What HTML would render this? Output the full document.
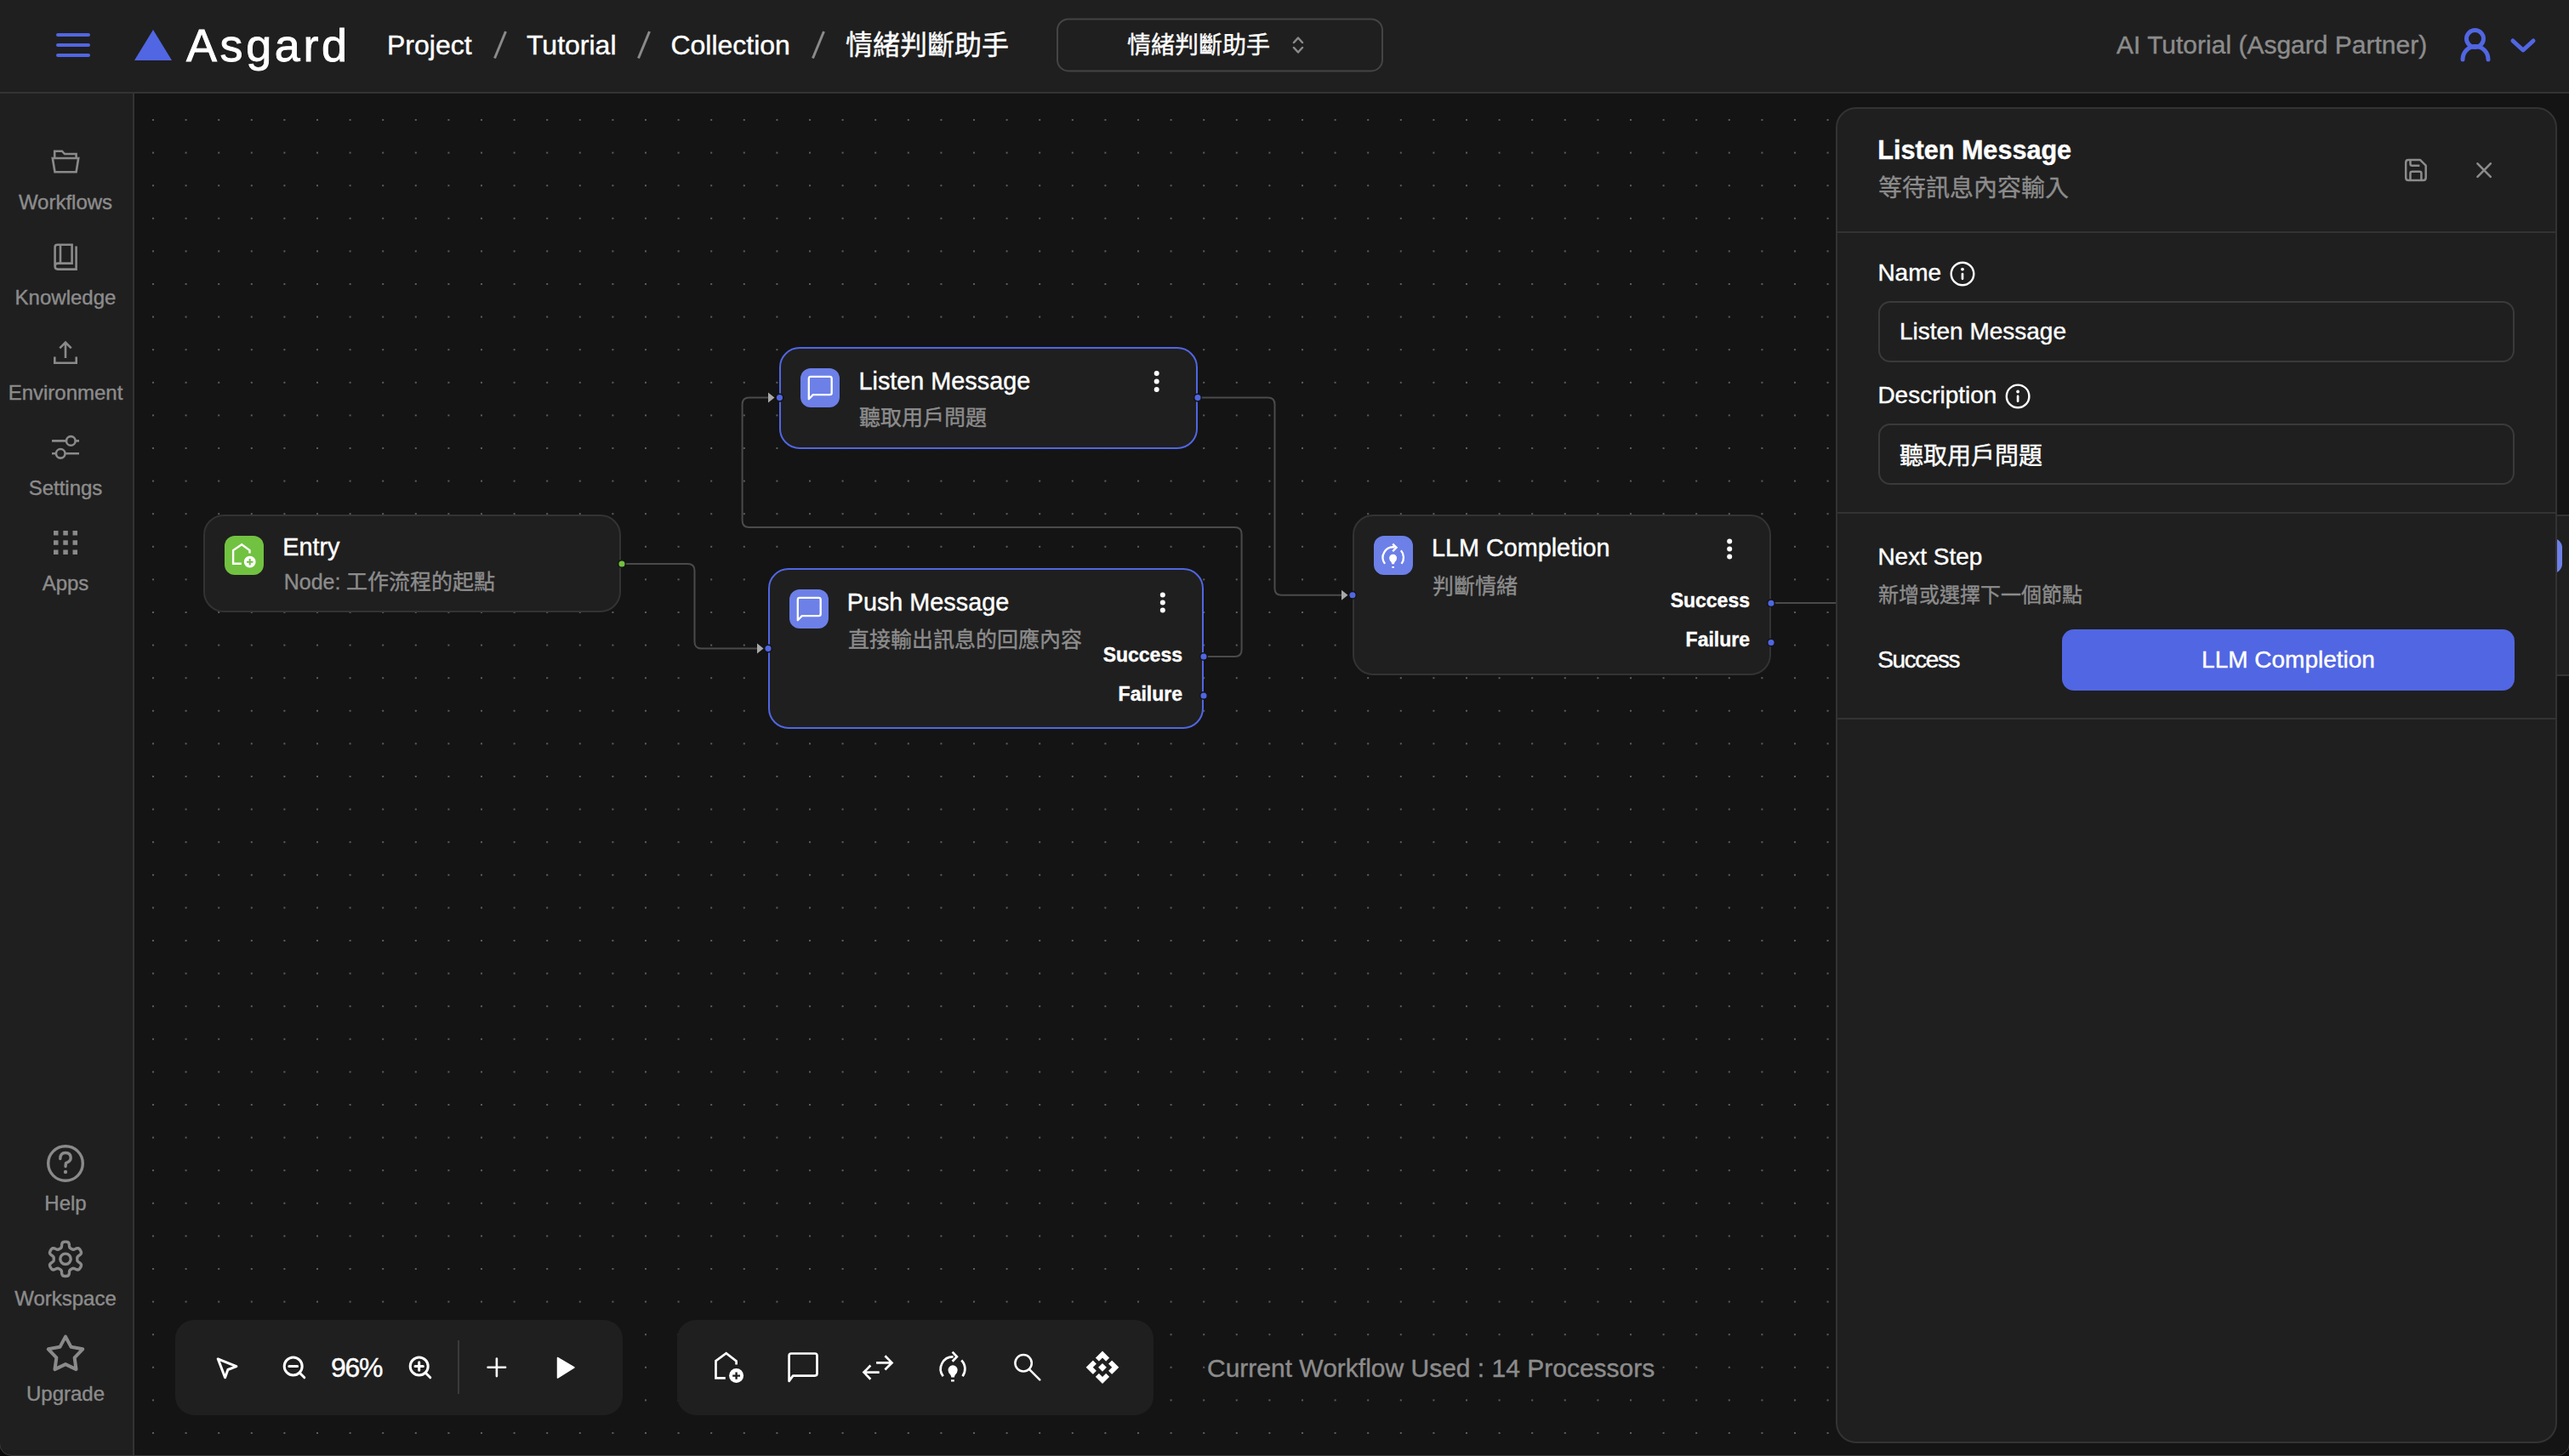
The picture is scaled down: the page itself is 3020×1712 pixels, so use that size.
<!DOCTYPE html>
<html lang="zh-TW">
<head>
<meta charset="utf-8">
<style>
html,body{margin:0;padding:0;}
body{width:3020px;height:1712px;overflow:hidden;position:relative;background:#141414;font-family:"Liberation Sans",sans-serif;color:#fff;}
.a{position:absolute;}
.t{position:absolute;white-space:nowrap;line-height:1;-webkit-text-stroke:0.4px currentColor;}
#hdr{left:0;top:0;width:3020px;height:108px;background:#1f1f1f;border-bottom:2px solid #333;}
#side{left:0;top:110px;width:156px;height:1602px;background:#1f1f1f;border-right:2px solid #333;}
#canvas{left:158px;top:110px;width:2862px;height:1602px;background-color:#141414;}
.node{position:absolute;box-sizing:border-box;background:#1f1f1f;border:2px solid #333;border-radius:24px;}
.node.sel{border-color:#5166e3;}
.ico{position:absolute;width:46px;height:46px;border-radius:12px;}
.gray{color:#8c8c8c;}
.panel{left:2158px;top:126px;width:848px;height:1570.5px;box-sizing:border-box;background:#1f1f1f;border:2px solid #333;border-radius:24px;}
.hr{position:absolute;height:2px;background:#333;}
.inp{position:absolute;box-sizing:border-box;border:2px solid #3a3a3a;border-radius:14px;}
.tb{position:absolute;top:1552px;height:112px;background:#1f1f1f;border-radius:22px;}
svg{position:absolute;overflow:visible;}
</style>
</head>
<body>
<!-- canvas with dots -->
<div id="canvas" class="a">
<svg style="left:0;top:0" width="2862" height="1602"><defs><pattern id="dots" patternUnits="userSpaceOnUse" x="21" y="30" width="38.6" height="38.6"><rect x="0" y="0" width="2" height="2" fill="#5c5c5c"/></pattern></defs><rect width="2862" height="1602" fill="url(#dots)"/></svg>
</div>

<!-- header -->
<div id="hdr" class="a"></div>
<svg style="left:0;top:0" width="3020" height="108">
 <g stroke="#5166e3" stroke-width="4" stroke-linecap="round">
  <line x1="68" y1="41" x2="104" y2="41"/><line x1="68" y1="53" x2="104" y2="53"/><line x1="68" y1="65" x2="104" y2="65"/>
 </g>
 <polygon points="158,71 202,71 180,35" fill="#5166e3"/>
 <g stroke="#8a8a8a" stroke-width="3">
  <line x1="581.5" y1="68.5" x2="594.5" y2="37"/><line x1="750.5" y1="68.5" x2="763.5" y2="37"/><line x1="955.5" y1="68.5" x2="968.5" y2="37"/>
 </g>
 <rect x="1243" y="22.4" width="382" height="61" rx="13" fill="none" stroke="#444" stroke-width="2"/>
 <g stroke="#8a8a8a" stroke-width="2.5" fill="none" stroke-linecap="round" stroke-linejoin="round">
  <polyline points="1521,50 1526,44.5 1531,50"/><polyline points="1521,56 1526,61.5 1531,56"/>
 </g>
 <g stroke="#5166e3" stroke-width="5" fill="none" stroke-linecap="round">
  <circle cx="2909.5" cy="45.5" r="10"/>
  <path d="M2895 70 A15 15.5 0 0 1 2925 70"/>
  <polyline points="2954,48 2966,59 2978,48" stroke-linejoin="round"/>
 </g>
</svg>
<div class="t" style="left:219px;top:26px;font-size:54px;letter-spacing:3.6px;-webkit-text-stroke:0.9px #fff;">Asgard</div>
<div class="t" style="left:455px;top:37.4px;font-size:32px;">Project</div>
<div class="t" style="left:619px;top:37.4px;font-size:32px;">Tutorial</div>
<div class="t" style="left:788.4px;top:37.4px;font-size:32px;">Collection</div>
<div class="t" style="left:994px;top:37.4px;font-size:32px;">情緒判斷助手</div>
<div class="t" style="left:1325px;top:40px;font-size:28px;">情緒判斷助手</div>
<div class="t gray" style="left:2488px;top:37.8px;font-size:30px;">AI Tutorial (Asgard Partner)</div>
<!-- sidebar -->
<div id="side" class="a"></div>
<svg style="left:0;top:110px" width="156" height="1602">
 <g stroke="#8a8a8a" stroke-width="3" fill="none" stroke-linejoin="round" stroke-linecap="round">
  <!-- folder -->
  <path d="M61.8 76 L64.5 92.2 L89.6 92.2 L92.2 76 Z M64.2 75.5 L64.2 67.7 L73 67.7 L76 71 L89.6 71 L89.6 75.5" stroke-width="2.6" stroke-linejoin="miter"/>
  <!-- book -->
  <path d="M64.6 203 L64.6 180.5 Q64.6 177.7 67.4 177.7 L84.6 177.7 L84.6 199.6 L68 199.6 Q64.6 199.6 64.6 203 Q64.6 206.6 68 206.6 L89.6 206.6 L89.6 179.5 M71 178 L71 199.6" stroke-width="2.6" stroke-linecap="butt" stroke-linejoin="miter"/>
  <!-- upload -->
  <path d="M77 292.5 L77 311 M70.3 299.3 L77 292.5 L83.7 299.3 M64.3 309.5 L64.3 316.7 L89.7 316.7 L89.7 309.5" stroke-width="2.6" stroke-linecap="butt" stroke-linejoin="miter"/>
  <!-- sliders -->
  <path d="M61 408.4 L93 408.4 M61 423.3 L93 423.3" stroke-width="2.6" stroke-linecap="butt"/>
  <circle cx="83.3" cy="408.4" r="5.3" fill="#1f1f1f" stroke-width="2.6"/>
  <circle cx="71.2" cy="423.3" r="5.3" fill="#1f1f1f" stroke-width="2.6"/>
  <!-- help -->
  <circle cx="77" cy="1258" r="20.3" stroke-width="3.4"/>
  <path d="M70.8 1252.5 Q70.8 1245.5 77 1245.5 Q83.2 1245.5 83.2 1251.5 Q83.2 1255.5 77.5 1257.5 L77 1261.5" stroke-width="3.4"/>
  <!-- gear -->
  <path d="M90.80 1370.30 L90.80 1370.66 L90.80 1371.02 L90.81 1371.39 L90.83 1371.75 L90.88 1372.13 L91.01 1372.52 L91.26 1372.94 L91.73 1373.43 L92.47 1374.02 L93.42 1374.70 L94.34 1375.44 L95.01 1376.15 L95.38 1376.81 L95.50 1377.40 L95.48 1377.95 L95.36 1378.47 L95.19 1378.98 L94.98 1379.46 L94.75 1379.94 L94.49 1380.40 L94.22 1380.85 L93.93 1381.29 L93.61 1381.71 L93.26 1382.11 L92.87 1382.48 L92.40 1382.77 L91.82 1382.96 L91.07 1382.97 L90.12 1382.75 L89.02 1382.32 L87.95 1381.84 L87.08 1381.49 L86.42 1381.33 L85.92 1381.32 L85.52 1381.41 L85.17 1381.55 L84.84 1381.71 L84.53 1381.89 L84.21 1382.07 L83.90 1382.25 L83.59 1382.43 L83.27 1382.61 L82.96 1382.80 L82.65 1383.00 L82.36 1383.23 L82.08 1383.54 L81.84 1383.97 L81.65 1384.62 L81.52 1385.56 L81.40 1386.72 L81.22 1387.89 L80.94 1388.83 L80.55 1389.47 L80.10 1389.88 L79.61 1390.13 L79.10 1390.29 L78.58 1390.39 L78.06 1390.45 L77.53 1390.49 L77.00 1390.50 L76.47 1390.49 L75.94 1390.45 L75.42 1390.39 L74.90 1390.29 L74.39 1390.13 L73.90 1389.88 L73.45 1389.47 L73.06 1388.83 L72.78 1387.89 L72.60 1386.72 L72.48 1385.56 L72.35 1384.62 L72.16 1383.97 L71.92 1383.54 L71.64 1383.23 L71.35 1383.00 L71.04 1382.80 L70.73 1382.61 L70.41 1382.43 L70.10 1382.25 L69.79 1382.07 L69.47 1381.89 L69.16 1381.71 L68.83 1381.55 L68.48 1381.41 L68.08 1381.32 L67.58 1381.33 L66.92 1381.49 L66.05 1381.84 L64.98 1382.32 L63.88 1382.75 L62.93 1382.97 L62.18 1382.96 L61.60 1382.77 L61.13 1382.48 L60.74 1382.11 L60.39 1381.71 L60.07 1381.29 L59.78 1380.85 L59.51 1380.40 L59.25 1379.94 L59.02 1379.46 L58.81 1378.98 L58.64 1378.47 L58.52 1377.95 L58.50 1377.40 L58.62 1376.81 L58.99 1376.15 L59.66 1375.44 L60.58 1374.70 L61.53 1374.02 L62.27 1373.43 L62.74 1372.94 L62.99 1372.52 L63.12 1372.13 L63.17 1371.75 L63.19 1371.39 L63.20 1371.02 L63.20 1370.66 L63.20 1370.30 L63.20 1369.94 L63.20 1369.58 L63.19 1369.21 L63.17 1368.85 L63.12 1368.47 L62.99 1368.08 L62.74 1367.66 L62.27 1367.17 L61.53 1366.58 L60.58 1365.90 L59.66 1365.16 L58.99 1364.45 L58.62 1363.79 L58.50 1363.20 L58.52 1362.65 L58.64 1362.13 L58.81 1361.62 L59.02 1361.14 L59.25 1360.66 L59.51 1360.20 L59.78 1359.75 L60.07 1359.31 L60.39 1358.89 L60.74 1358.49 L61.13 1358.12 L61.60 1357.83 L62.18 1357.64 L62.93 1357.63 L63.88 1357.85 L64.98 1358.28 L66.05 1358.76 L66.92 1359.11 L67.58 1359.27 L68.08 1359.28 L68.48 1359.19 L68.83 1359.05 L69.16 1358.89 L69.47 1358.71 L69.79 1358.53 L70.10 1358.35 L70.41 1358.17 L70.73 1357.99 L71.04 1357.80 L71.35 1357.60 L71.64 1357.37 L71.92 1357.06 L72.16 1356.63 L72.35 1355.98 L72.48 1355.04 L72.60 1353.88 L72.78 1352.71 L73.06 1351.77 L73.45 1351.13 L73.90 1350.72 L74.39 1350.47 L74.90 1350.31 L75.42 1350.21 L75.94 1350.15 L76.47 1350.11 L77.00 1350.10 L77.53 1350.11 L78.06 1350.15 L78.58 1350.21 L79.10 1350.31 L79.61 1350.47 L80.10 1350.72 L80.55 1351.13 L80.94 1351.77 L81.22 1352.71 L81.40 1353.88 L81.52 1355.04 L81.65 1355.98 L81.84 1356.63 L82.08 1357.06 L82.36 1357.37 L82.65 1357.60 L82.96 1357.80 L83.27 1357.99 L83.59 1358.17 L83.90 1358.35 L84.21 1358.53 L84.53 1358.71 L84.84 1358.89 L85.17 1359.05 L85.52 1359.19 L85.92 1359.28 L86.42 1359.27 L87.08 1359.11 L87.95 1358.76 L89.02 1358.28 L90.12 1357.85 L91.07 1357.63 L91.82 1357.64 L92.40 1357.83 L92.87 1358.12 L93.26 1358.49 L93.61 1358.89 L93.93 1359.31 L94.22 1359.75 L94.49 1360.20 L94.75 1360.66 L94.98 1361.14 L95.19 1361.62 L95.36 1362.13 L95.48 1362.65 L95.50 1363.20 L95.38 1363.79 L95.01 1364.45 L94.34 1365.16 L93.42 1365.90 L92.47 1366.58 L91.73 1367.17 L91.26 1367.66 L91.01 1368.08 L90.88 1368.47 L90.83 1368.85 L90.81 1369.21 L90.80 1369.58 L90.80 1369.94 L90.80 1370.30 Z" stroke-width="3.4"/>
  <circle cx="77" cy="1370.3" r="6.2" stroke-width="3.4"/>
  <!-- star -->
  <path d="M77.00 1461.60 L83.58 1473.84 L97.26 1476.32 L87.65 1486.36 L89.52 1500.13 L77.00 1494.10 L64.48 1500.13 L66.35 1486.36 L56.74 1476.32 L70.42 1473.84 Z" stroke-width="4" stroke-linejoin="round"/>
 </g>
 <g fill="#8a8a8a">
  <circle cx="77" cy="1268" r="2.2"/>
  <rect x="63" y="514" width="5.5" height="5.5"/><rect x="74.3" y="514" width="5.5" height="5.5"/><rect x="85.5" y="514" width="5.5" height="5.5"/>
  <rect x="63" y="525.3" width="5.5" height="5.5"/><rect x="74.3" y="525.3" width="5.5" height="5.5"/><rect x="85.5" y="525.3" width="5.5" height="5.5"/>
  <rect x="63" y="536.5" width="5.5" height="5.5"/><rect x="74.3" y="536.5" width="5.5" height="5.5"/><rect x="85.5" y="536.5" width="5.5" height="5.5"/>
 </g>
</svg>
<div class="t gray" style="left:0;width:154px;text-align:center;top:225.7px;font-size:24px;">Workflows</div>
<div class="t gray" style="left:0;width:154px;text-align:center;top:337.7px;font-size:24px;">Knowledge</div>
<div class="t gray" style="left:0;width:154px;text-align:center;top:449.7px;font-size:24px;">Environment</div>
<div class="t gray" style="left:0;width:154px;text-align:center;top:561.7px;font-size:24px;">Settings</div>
<div class="t gray" style="left:0;width:154px;text-align:center;top:673.7px;font-size:24px;">Apps</div>
<div class="t gray" style="left:0;width:154px;text-align:center;top:1403.4px;font-size:24px;">Help</div>
<div class="t gray" style="left:0;width:154px;text-align:center;top:1515.2px;font-size:24px;">Workspace</div>
<div class="t gray" style="left:0;width:154px;text-align:center;top:1626.7px;font-size:24px;">Upgrade</div>

<!-- connectors -->
<svg style="left:0;top:0" width="3020" height="1712">
 <g fill="none" stroke="#4a4a4a" stroke-width="2">
  <path d="M731 663 H808.5 Q816.5 663 816.5 671 V754.6 Q816.5 762.6 824.5 762.6 H891"/>
  <path d="M1408 467.6 H1490.5 Q1498.5 467.6 1498.5 475.6 V691.7 Q1498.5 699.7 1506.5 699.7 H1578"/>
  <path d="M1415 772 H1451.6 Q1459.6 772 1459.6 764 V628 Q1459.6 620 1451.6 620 H880.6 Q872.6 620 872.6 612 V475.6 Q872.6 467.6 880.6 467.6 H904"/>
  <path d="M2082 709 H2170"/>
 </g>
 <g fill="#a8a8a8">
  <polygon points="890,756.6 897.5,762.6 890,768.6"/>
  <polygon points="903,461.6 910.5,467.6 903,473.6"/>
  <polygon points="1577,693.7 1584.5,699.7 1577,705.7"/>
 </g>
</svg>

<!-- Entry node -->
<div class="node" style="left:239px;top:605px;width:491px;height:115px;"></div>
<svg style="left:264px;top:630px" width="46" height="46" viewBox="0 0 46 46">
 <rect width="46" height="46" rx="12" fill="#72c241"/>
 <path d="M19.8 32.7 H10.1 V17.1 L20.2 10.2 L29.5 17.1 V20.6" fill="none" stroke="#fff" stroke-width="2.4"/>
 <circle cx="29.7" cy="30.7" r="6.9" fill="#fff"/>
 <path d="M26 30.7 H33.5 M29.7 27 V34.5" stroke="#72c241" stroke-width="2"/>
</svg>
<div class="t" style="left:332.3px;top:629.3px;font-size:28.8px;">Entry</div>
<div class="t gray" style="left:333.7px;top:672.3px;font-size:25px;">Node: 工作流程的起點</div>

<!-- Listen node -->
<div class="node sel" style="left:916px;top:408px;width:492px;height:120px;"></div>
<svg style="left:941px;top:433px" width="46" height="46" viewBox="0 0 46 46">
 <rect width="46" height="46" rx="12" fill="#6c80e8"/>
 <path d="M9.8 36.2 V12 Q9.8 9.8 12 9.8 H34.5 Q36.7 9.8 36.7 12 V29 Q36.7 31.1 34.5 31.1 H14.8 Z" fill="none" stroke="#fff" stroke-width="2.3" stroke-linejoin="round"/>
</svg>
<div class="t" style="left:1009.5px;top:434.2px;font-size:28.8px;">Listen Message</div>
<div class="t gray" style="left:1010px;top:478.8px;font-size:25px;">聽取用戶問題</div>

<!-- Push node -->
<div class="node sel" style="left:902.5px;top:668px;width:512.5px;height:189px;"></div>
<svg style="left:928px;top:693px" width="46" height="46" viewBox="0 0 46 46">
 <rect width="46" height="46" rx="12" fill="#6c80e8"/>
 <path d="M9.8 36.2 V12 Q9.8 9.8 12 9.8 H34.5 Q36.7 9.8 36.7 12 V29 Q36.7 31.1 34.5 31.1 H14.8 Z" fill="none" stroke="#fff" stroke-width="2.3" stroke-linejoin="round"/>
</svg>
<div class="t" style="left:995.7px;top:694px;font-size:28.8px;">Push Message</div>
<div class="t gray" style="left:997px;top:739.8px;font-size:25px;">直接輸出訊息的回應內容</div>
<div class="t" style="right:1630px;top:758.7px;font-size:23px;font-weight:bold;">Success</div>
<div class="t" style="right:1630px;top:804.8px;font-size:23px;font-weight:bold;">Failure</div>

<!-- LLM node -->
<div class="node" style="left:1589.5px;top:605px;width:492px;height:189px;"></div>
<svg style="left:1615px;top:630px" width="46" height="46" viewBox="0 0 46 46">
 <rect width="46" height="46" rx="12" fill="#6c80e8"/>
 <g fill="none" stroke="#fff" stroke-width="2.3">
  <path d="M13.06 32.84 A12.2 12.2 0 0 1 24.5 13.4 M31.87 17.34 A12.2 12.2 0 0 1 32.54 32.84"/>
  <polyline points="22.2,9.6 26.6,13.8 22.2,18.2"/>
 </g>
 <path d="M18.1 26.2 A4.5 4.5 0 0 1 27.1 26.2 Q27.1 28.5 24.6 31 L23.9 33.3 H21.3 L20.6 31 Q18.1 28.5 18.1 26.2 Z" fill="#fff"/>
 <rect x="21.3" y="36" width="2.6" height="1.8" fill="#fff"/>
</svg>
<div class="t" style="left:1682.9px;top:630.4px;font-size:28.8px;">LLM Completion</div>
<div class="t gray" style="left:1684px;top:676.8px;font-size:25px;">判斷情緒</div>
<div class="t" style="right:963px;top:695.2px;font-size:23px;font-weight:bold;">Success</div>
<div class="t" style="right:963px;top:741px;font-size:23px;font-weight:bold;">Failure</div>

<!-- ports & kebabs -->
<svg style="left:0;top:0" width="3020" height="1712">
 <g fill="#fff">
  <circle cx="1359.7" cy="439" r="3"/><circle cx="1359.7" cy="448.5" r="3"/><circle cx="1359.7" cy="458" r="3"/>
  <circle cx="1366.8" cy="699.5" r="3"/><circle cx="1366.8" cy="708.5" r="3"/><circle cx="1366.8" cy="717.5" r="3"/>
  <circle cx="2033.2" cy="636.5" r="3"/><circle cx="2033.2" cy="645.5" r="3"/><circle cx="2033.2" cy="654.5" r="3"/>
 </g>
 <g stroke="#141414" stroke-width="1.5">
  <circle cx="731" cy="663" r="4.3" fill="#72c241"/>
  <circle cx="916.5" cy="467.6" r="4.3" fill="#5166e3"/>
  <circle cx="1408" cy="467.6" r="4.3" fill="#5166e3"/>
  <circle cx="903" cy="762.6" r="4.3" fill="#5166e3"/>
  <circle cx="1415" cy="772" r="4.3" fill="#5166e3"/>
  <circle cx="1415" cy="818" r="4.3" fill="#5166e3"/>
  <circle cx="1590" cy="699.7" r="4.3" fill="#5166e3"/>
  <circle cx="2082" cy="709.2" r="4.3" fill="#5166e3"/>
  <circle cx="2082" cy="755.5" r="4.3" fill="#5166e3"/>
 </g>
</svg>

<!-- offscreen node behind panel -->
<div class="a" style="left:2990px;top:605px;width:40px;height:189.5px;box-sizing:border-box;background:#1f1f1f;border:2px solid #333;"></div>
<div class="a" style="left:2966px;top:633px;width:46px;height:41px;border-radius:11px;background:#6c80e8;"></div>
<!-- right panel -->
<div class="a panel"></div>
<div class="t" style="left:2207.3px;top:161.1px;font-size:30.6px;font-weight:bold;">Listen Message</div>
<div class="t gray" style="left:2207.5px;top:207.8px;font-size:28px;">等待訊息內容輸入</div>
<svg style="left:0;top:0" width="3020" height="1712">
 <g fill="none" stroke="#8c8c8c" stroke-width="2.5" stroke-linejoin="round">
  <path d="M2831.2 187.9 H2844.9 L2851.7 194.7 V208.9 Q2851.7 211.9 2848.7 211.9 H2831.2 Q2828.2 211.9 2828.2 208.9 V190.9 Q2828.2 187.9 2831.2 187.9 Z M2833.5 188 V192.7 Q2833.5 194.7 2835.5 194.7 H2844.4 M2833.5 211.5 V203.8 Q2833.5 201.8 2835.5 201.8 H2844.4 Q2846.4 201.8 2846.4 203.8 V211.5"/>
 </g>
 <g stroke="#8c8c8c" stroke-width="2.6" stroke-linecap="round">
  <line x1="2912.5" y1="192.3" x2="2927.8" y2="207.8"/><line x1="2927.8" y1="192.3" x2="2912.5" y2="207.8"/>
 </g>
 <g fill="none" stroke="#fff" stroke-width="2.4">
  <circle cx="2307" cy="322" r="13.3"/>
  <circle cx="2372.1" cy="465.9" r="13.3"/>
 </g>
 <g fill="#fff">
  <circle cx="2307" cy="316.6" r="1.9"/><circle cx="2372.1" cy="460.5" r="1.9"/>
 </g>
 <g stroke="#fff" stroke-width="2.7" stroke-linecap="round">
  <line x1="2307" y1="322" x2="2307" y2="327.8"/><line x1="2372.1" y1="465.9" x2="2372.1" y2="471.7"/>
 </g>
</svg>
<div class="hr" style="left:2160px;top:271.5px;width:844px;"></div>
<div class="t" style="left:2207.4px;top:307.3px;font-size:28px;">Name</div>
<div class="inp" style="left:2208px;top:354px;width:748px;height:72px;"></div>
<div class="t" style="left:2232.9px;top:375.9px;font-size:28px;">Listen Message</div>
<div class="t" style="left:2207.4px;top:451.3px;font-size:28px;">Description</div>
<div class="inp" style="left:2208px;top:498px;width:748px;height:72px;"></div>
<div class="t" style="left:2233px;top:523.3px;font-size:28px;">聽取用戶問題</div>
<div class="hr" style="left:2160px;top:601.5px;width:844px;"></div>
<div class="t" style="left:2207.4px;top:641.3px;font-size:28px;">Next Step</div>
<div class="t gray" style="left:2208px;top:687.7px;font-size:24px;">新增或選擇下一個節點</div>
<div class="t" style="left:2207.2px;top:761.8px;font-size:28px;letter-spacing:-1.4px;">Success</div>
<div class="a" style="left:2424px;top:740px;width:532px;height:72px;border-radius:14px;background:#5166e3;"></div>
<div class="t" style="left:2424px;width:532px;text-align:center;top:761.8px;font-size:28px;">LLM Completion</div>
<div class="hr" style="left:2160px;top:844px;width:844px;"></div>
<!-- toolbars -->
<div class="tb" style="left:206px;width:526px;"></div>
<div class="tb" style="left:796px;width:560px;"></div>
<div class="a" style="left:538.2px;top:1576px;width:2px;height:63px;background:#3a3a3a;"></div>
<div class="t" style="left:389px;top:1592.3px;font-size:32px;letter-spacing:-1.3px;">96%</div>
<div class="t gray" style="left:1419px;top:1593.6px;font-size:30px;">Current Workflow Used : 14 Processors</div>
<svg style="left:0;top:0" width="3020" height="1712">
 <g fill="none" stroke="#fff" stroke-width="3" stroke-linecap="round" stroke-linejoin="round">
  <path d="M256.2 1597.8 L277.9 1606.7 L267.9 1610.5 L264.6 1619.8 Z"/>
  <circle cx="344.7" cy="1606.5" r="10.5"/><path d="M352.3 1614.3 L357.8 1619.8 M339.8 1606.5 H349.6"/>
  <circle cx="492.7" cy="1606.5" r="10.5"/><path d="M500.3 1614.3 L505.8 1619.8 M488 1606.5 H497.4 M492.7 1601.8 V1611.2"/>
 </g>
 <g fill="none" stroke="#fff" stroke-width="2.6" stroke-linecap="round">
  <path d="M573.6 1607.8 H594.1 M583.9 1597.5 V1618.1"/>
 </g>
 <path d="M655.5 1596.5 L675 1607.8 L655.5 1620 Z" fill="#fff" stroke="#fff" stroke-width="1.5" stroke-linejoin="round"/>
 <!-- toolbar 2 -->
 <g fill="none" stroke="#fff" stroke-width="2.7">
  <path d="M852.8 1620.3 H841.5 V1600.1 L853.7 1591.2 L865.6 1600.4 V1604.6"/>
  <path d="M927.6 1623.9 V1594 Q927.6 1591.5 930.1 1591.5 H958 Q960.5 1591.5 960.5 1594 V1615.1 Q960.5 1617.6 958 1617.6 H932.2 Z" stroke-linejoin="round"/>
  <path d="M1030.1 1602.4 H1048.5 M1040.4 1594.3 L1048.5 1602.4 L1040.4 1610.5 M1033.7 1613.6 H1015.7 M1023.4 1605.5 L1015.5 1613.6 L1023.4 1621.7"/>
  <path d="M1108.68 1618.21 A14.3 14.3 0 0 1 1120.60 1595.31 M1130.21 1599.49 A14.3 14.3 0 0 1 1131.52 1618.21"/>
  <polyline points="1119.6,1589.6 1124.9,1595.2 1119.6,1600.8"/>
  <circle cx="1203.1" cy="1602.8" r="9.7" stroke-width="2.5"/>
  <path d="M1210.3 1610.4 L1222.3 1622.3" stroke-width="2.6" stroke-linecap="round"/>
 </g>
 <circle cx="865.6" cy="1617.6" r="8.5" fill="#fff"/>
 <path d="M861.2 1617.6 H870 M865.6 1613.4 V1621.8" stroke="#1f1f1f" stroke-width="2.4"/>
 <path d="M1114.5 1610.9 A5.6 5.6 0 0 1 1125.7 1610.9 Q1125.7 1614 1122.6 1617 L1121.8 1619.6 H1118.4 L1117.6 1617 Q1114.5 1614 1114.5 1610.9 Z" fill="#fff"/>
 <rect x="1118" y="1622.3" width="3.8" height="2.2" fill="#fff"/>
 <!-- diamond -->
 <g transform="translate(1296 1607.8)">
  <polygon points="0,-19.3 19.3,0 0,19.3 -19.3,0" fill="#fff"/>
  <polygon points="0,-11.2 11.2,0 0,11.2 -11.2,0" fill="#1f1f1f"/>
  <path d="M-16 -16 L16 16 M16 -16 L-16 16" stroke="#1f1f1f" stroke-width="4.2"/>
  <polygon points="0,-4.9 4.9,0 0,4.9 -4.9,0" fill="#fff"/>
 </g>
</svg>
<div class="a" style="left:-1px;top:-40px;width:3020px;height:1750px;border-radius:0 0 15px 15px;border:1px solid #3a3a3a;box-shadow:0 0 0 60px #0c0e0c;pointer-events:none;"></div>
</body>
</html>
